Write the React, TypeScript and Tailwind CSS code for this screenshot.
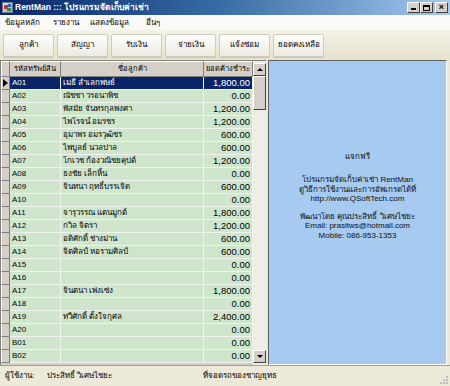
import React from "react";

const rows: [string, string, string][] = [
  ["A01", "เมธี ลำเลกพษย์", "1,800.00"],
  ["A02", "ณัชชา วรอนาพิช", "0.00"],
  ["A03", "พัสมัย จันทรกุลพงศา", "1,200.00"],
  ["A04", "ไพโรจน์ อมรชร", "1,200.00"],
  ["A05", "อุมาพร อมรวุฒิชร", "600.00"],
  ["A06", "ไพบูลย์ นวลปาล", "600.00"],
  ["A07", "โกเวช ก้องวณิชยคุปต์", "1,200.00"],
  ["A08", "ธงชัย เล็กหิ้น", "0.00"],
  ["A09", "จินทนา ฤทธิ์บรรเจิด", "600.00"],
  ["A10", "", "0.00"],
  ["A11", "จารุวรรณ แตนมูกต์", "1,800.00"],
  ["A12", "กวิล จิตรา", "1,200.00"],
  ["A13", "อดิศักดิ์ ช่างม่าน", "600.00"],
  ["A14", "จิตศิลป์ หอรามศิลป์", "600.00"],
  ["A15", "", "0.00"],
  ["A16", "", "0.00"],
  ["A17", "จินตนา เพ่งเซ่ง", "1,800.00"],
  ["A18", "", "0.00"],
  ["A19", "ทวีศักดิ์ ตั้งใจกุศล", "2,400.00"],
  ["A20", "", "0.00"],
  ["B01", "", "0.00"],
  ["B02", "", "0.00"],
];

const buttons = ["ลูกค้า", "สัญญา", "รับเงิน", "จ่ายเงิน", "แจ้งซ่อม", "ยอดคงเหลือ"];

export default function App() {
  return (
    <div
      className="w-[450px] h-[386px] overflow-hidden flex flex-col bg-[#ece9d8] text-[10px] text-black whitespace-nowrap"
      style={{ fontFamily: '"Liberation Sans", "DejaVu Sans", "Noto Sans", sans-serif' }}
    >
      {/* Title bar */}
      <div className="h-[15px] flex items-center bg-gradient-to-r from-[#0a246a] via-[#3a6ea5] to-[#a6caf0] pl-[2px] pr-[2px]">
        <div className="w-[11px] h-[11px] bg-gradient-to-br from-[#e8e8e8] to-[#8fa8c8] border border-[#6a7a90] relative mr-[2px]">
          <div className="absolute left-[1px] top-[2px] w-[4px] h-[4px] bg-[#d03030]" />
          <div className="absolute right-[1px] bottom-[1px] w-[4px] h-[3px] bg-[#3a8a3a]" />
          <div className="absolute right-[1px] top-[1px] w-[3px] h-[3px] bg-[#3060c0]" />
        </div>
        <span className="text-white font-bold text-[8.5px] leading-none">RentMan ::: โปรแกรมจัดเก็บค่าเช่า</span>
        <div className="ml-auto flex">
          <div className="w-[13px] h-[11px] bg-[#d4d0c8] border border-t-white border-l-white border-r-[#404040] border-b-[#404040] flex items-end justify-center pb-[2px]">
            <div className="w-[5px] h-[2px] bg-black" />
          </div>
          <div className="w-[13px] h-[11px] bg-[#d4d0c8] border border-t-white border-l-white border-r-[#404040] border-b-[#404040] flex items-center justify-center">
            <div className="w-[7px] h-[6px] border border-black border-t-2" />
          </div>
          <div className="w-[13px] h-[11px] ml-[2px] bg-[#d4d0c8] border border-t-white border-l-white border-r-[#404040] border-b-[#404040] flex items-center justify-center text-[9px] font-bold leading-none">
            ×
          </div>
        </div>
      </div>

      {/* Menu bar */}
      <div className="h-[15px] flex items-center bg-[#fafaf8] text-[8px] leading-none">
        <span className="ml-[5px] w-[48px]">ข้อมูลหลัก</span>
        <span className="w-[37px]">รายงาน</span>
        <span className="w-[56px]">แสดงข้อมูล</span>
        <span>อื่นๆ</span>
      </div>

      {/* Toolbar */}
      <div className="h-[30px] flex items-center gap-[3px] pl-[3px] bg-gradient-to-b from-[#f4f2e8] to-[#e6e2cc]">
        {buttons.map((b) => (
          <div
            key={b}
            className="w-[51px] h-[23px] flex items-center justify-center rounded-[2px] border border-[#d0ccbc] bg-gradient-to-b from-[#ffffff] to-[#ebe9e0] shadow-[0_1px_0_#c8c4b4] text-[8px] leading-none"
          >
            {b}
          </div>
        ))}
      </div>

      {/* Main */}
      <div className="flex-1 flex min-h-0">
        {/* Grid */}
        <div className="w-[266px] flex border-t border-l border-[#808080] bg-[#d4d0c8]">
          <div className="flex-1 flex flex-col">
            {/* Header */}
            <div className="h-[16px] flex text-[7.5px] leading-none">
              <div className="w-[9px] border-r border-b border-[#808080] border-t border-t-white border-l border-l-white bg-[#d4d0c8]" />
              <div className="w-[51px] border-r border-b border-[#808080] border-t border-t-white bg-[#d4d0c8] flex items-center justify-center">รหัสทรัพย์สิน</div>
              <div className="w-[143px] border-r border-b border-[#808080] border-t border-t-white bg-[#d4d0c8] flex items-center justify-center">ชื่อลูกค้า</div>
              <div className="flex-1 border-r border-b border-[#808080] border-t border-t-white bg-[#d4d0c8] flex items-center justify-center">ยอดค้างชำระ</div>
            </div>
            {rows.map(([code, name, amt], i) => {
              const sel = i === 0;
              const cell = sel ? "bg-[#0a246a] text-white" : "bg-[#cfe6cd]";
              return (
                <div key={code} className="h-[13px] flex leading-none">
                  <div className="w-[9px] bg-[#d4d0c8] border-r border-b border-[#808080] border-l border-l-white flex items-center justify-center">
                    {sel && (
                      <div className="w-0 h-0 border-t-[4px] border-b-[4px] border-l-[5px] border-t-transparent border-b-transparent border-l-black" />
                    )}
                  </div>
                  <div className={`w-[51px] border-r border-b border-[#f2f2f2] flex items-center pl-[2px] text-[8px] ${cell}`}>{code}</div>
                  <div className={`w-[143px] border-r border-b border-[#f2f2f2] flex items-center pl-[2px] text-[8px] ${cell}`}>{name}</div>
                  <div className={`flex-1 border-r border-b border-[#f2f2f2] flex items-center justify-end pr-[2px] text-[9.5px] ${cell}`}>{amt}</div>
                </div>
              );
            })}
          </div>
          {/* Scrollbar */}
          <div className="w-[13px] flex flex-col bg-[#eeede6]">
            <div className="h-[13px] mt-[2px] bg-[#d4d0c8] border border-t-white border-l-white border-r-[#404040] border-b-[#404040] flex items-center justify-center">
              <div className="w-0 h-0 border-l-[3px] border-r-[3px] border-b-[3px] border-l-transparent border-r-transparent border-b-black" />
            </div>
            <div className="h-[34px] bg-[#d4d0c8] border border-t-white border-l-white border-r-[#404040] border-b-[#404040]" />
            <div className="flex-1" />
            <div className="h-[13px] mb-[2px] bg-[#d4d0c8] border border-t-white border-l-white border-r-[#404040] border-b-[#404040] flex items-center justify-center">
              <div className="w-0 h-0 border-l-[3px] border-r-[3px] border-t-[3px] border-l-transparent border-r-transparent border-t-black" />
            </div>
          </div>
        </div>

        {/* Right info panel */}
        <div className="w-[179px] ml-[2px] bg-[#a6caf0] border-t border-l border-[#606060] border-r border-r-white border-b border-b-white flex flex-col items-center pt-[91px] text-[8px] leading-[9.5px] text-[#101010]">
          <div>แจกฟรี</div>
          <div className="mt-[7px]">&nbsp;</div>
          <div className="-mt-[3px]">โปรแกรมจัดเก็บค่าเช่า RentMan</div>
          <div>ดูวิธีการใช้งานและการอัพเกรดได้ที่</div>
          <div>http://www.QSoftTech.com</div>
          <div className="mt-[8px]">พัฒนาโดย คุณประสิทธิ์ วิเศษไชยะ</div>
          <div>Email: prasitws@hotmail.com</div>
          <div>Mobile: 086-953-1353</div>
        </div>
      </div>

      {/* Status bar */}
      <div className="h-[21px] flex items-center border-t border-[#a0a0a0] bg-[#ece9d8] text-[8px] leading-none relative">
        <span className="ml-[5px] w-[42px]">ผู้ใช้งาน:</span>
        <span className="w-[156px]">ประสิทธิ์ วิเศษไชยะ</span>
        <span>ที่จอดรถของชาญยุทธ</span>
        <div className="absolute right-[2px] bottom-[2px] w-[8px] h-[8px] grid grid-cols-3 gap-[1px] opacity-60">
          <div /><div /><div className="bg-[#a0a0a0]" />
          <div /><div className="bg-[#a0a0a0]" /><div className="bg-[#a0a0a0]" />
          <div className="bg-[#a0a0a0]" /><div className="bg-[#a0a0a0]" /><div className="bg-[#a0a0a0]" />
        </div>
      </div>
    </div>
  );
}
